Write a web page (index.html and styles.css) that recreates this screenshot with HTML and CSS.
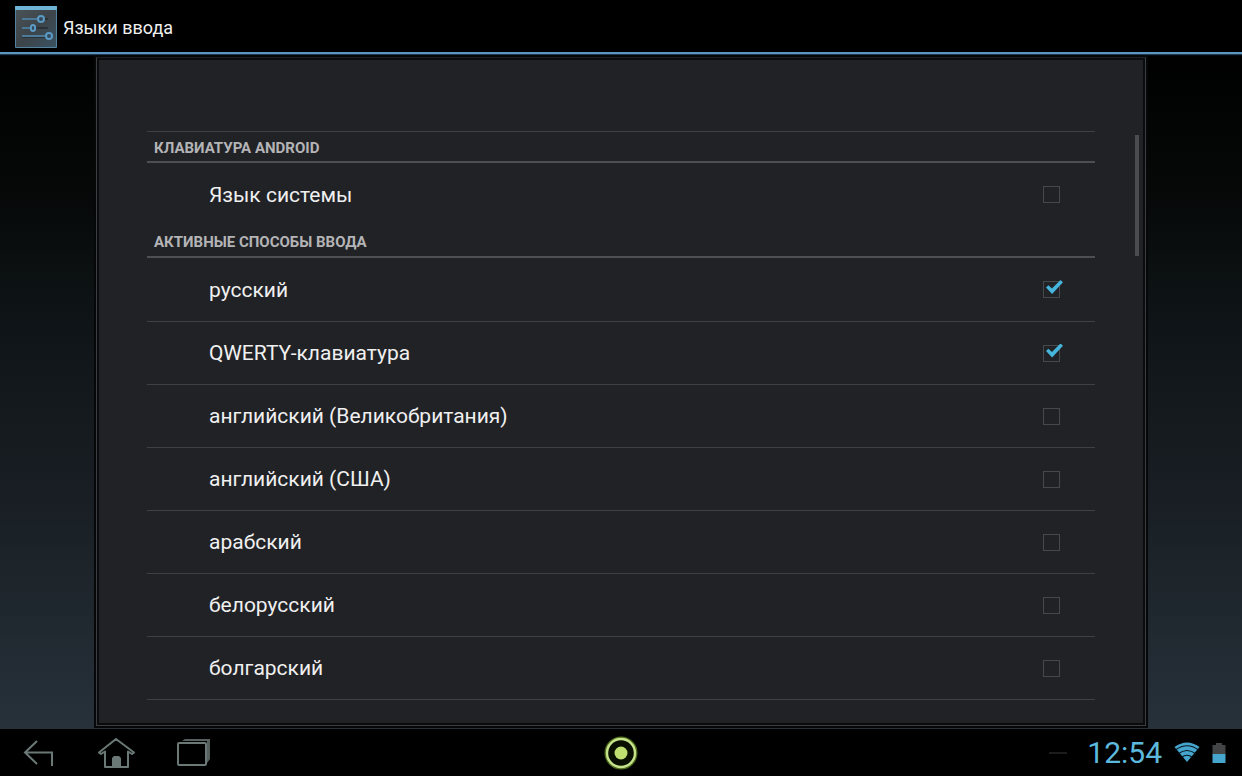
FILE: index.html
```html
<!DOCTYPE html>
<html lang="ru">
<head>
    <meta charset="UTF-8">
    <meta name="viewport" content="width=device-width, initial-scale=1.0">
    <title>Языки ввода</title>
    <link rel="stylesheet" href="styles.css">
</head>
<body>
    <header>
        <svg class="app-icon" viewBox="0 0 42 42" aria-hidden="true">
            <defs>
                <linearGradient id="tile" x1="0" y1="0" x2="1" y2="1">
                    <stop offset="0" stop-color="#4a5357"/>
                    <stop offset="0.5" stop-color="#3c4449"/>
                    <stop offset="1" stop-color="#3a5262"/>
                </linearGradient>
            </defs>
            <rect width="42" height="42" rx="1" fill="#5483a0"/>
            <rect x="1" y="3" width="40" height="38" fill="url(#tile)"/>
            <rect width="42" height="4" rx="1" fill="#6fb3d6"/>
            <path d="M7 13h26M7 22h26M7 31h26" stroke="#2c3338" stroke-width="2"/>
            <path d="M7 13h16M7 22h9M7 30h23" stroke="#5590b5" stroke-width="1.3"/>
            <g fill="#33495a" stroke="#5a9ac4" stroke-width="2">
                <circle cx="26" cy="13" r="3"/>
                <ellipse cx="18" cy="22" rx="2.2" ry="3"/>
                <circle cx="34" cy="30" r="3"/>
            </g>
        </svg>
        <h1>Языки ввода</h1>
    </header>

    <main>
        <form class="panel">
            <h2 class="first">Клавиатура Android</h2>
            <ul>
                <li><label>Язык системы <input type="checkbox"></label></li>
            </ul>
            <h2>Активные способы ввода</h2>
            <ul class="languages">
                <li><label>русский <input type="checkbox" checked></label></li>
                <li><label>QWERTY-клавиатура <input type="checkbox" checked></label></li>
                <li><label>английский (Великобритания) <input type="checkbox"></label></li>
                <li><label>английский (США) <input type="checkbox"></label></li>
                <li><label>арабский <input type="checkbox"></label></li>
                <li><label>белорусский <input type="checkbox"></label></li>
                <li><label>болгарский <input type="checkbox"></label></li>
            </ul>
            <span class="scroll-thumb"></span>
        </form>
    </main>

    <footer>
        <nav>
            <button type="button" aria-label="Назад">
                <svg width="32" height="30" viewBox="0 0 32 30"><path d="M14 3L2 14.500L14 26M2 14.500H29V28" fill="none" stroke="#6a7976" stroke-width="2"/></svg>
            </button>
            <button type="button" aria-label="Домой">
                <svg width="38" height="32" viewBox="0 0 38 32">
                    <path d="M19 2L2 15.500L4 17L8 14.500V30H31V14.500L35 17L37 15.500Z" fill="none" stroke="#6a7976" stroke-width="2" stroke-linejoin="round"/>
                    <path d="M15 30V21l2-2h5l2 2v9z" fill="#6a7976"/>
                </svg>
            </button>
            <button type="button" aria-label="Недавние приложения">
                <svg width="34" height="30" viewBox="0 0 34 30">
                    <path d="M5 3L8 1H33V21L30 25V3Z" fill="#56615f"/>
                    <rect x="1" y="5" width="28" height="22" rx="1" fill="#000" stroke="#6a7976" stroke-width="2"/>
                </svg>
            </button>
        </nav>
        <button type="button" class="ring" aria-label="Меню">
            <svg width="34" height="34" viewBox="0 0 34 34">
                <circle cx="17" cy="17" r="14" fill="none" stroke="#4d6a1c" stroke-width="5"/>
                <circle cx="17" cy="17" r="14" fill="#0a1000" stroke="#c6e38c" stroke-width="2.400"/>
                <circle cx="17" cy="17" r="6.500" fill="#bfe070"/>
            </svg>
        </button>
        <div class="status">
            <span class="dash"></span>
            <time>12:54</time>
            <svg width="26" height="21" viewBox="0 0 26 21" aria-hidden="true">
                <path d="M13 20L0.500 5Q13 -4 25.500 5Z" fill="#46a5cc"/>
                <path d="M1.500 8Q13 -0.500 24.500 8M4 12Q13 5 22 12M7.500 15.500Q13 11 18.500 15.500" fill="none" stroke="#06141b" stroke-width="1.200"/>
            </svg>
            <svg width="14" height="20" viewBox="0 0 14 20" aria-hidden="true">
                <path d="M4 0h6v2h3.500v9H0.500V2H4z" fill="#434445"/>
                <rect x="0.500" y="11" width="13" height="9" fill="#46a5cc"/>
            </svg>
        </div>
    </footer>
</body>
</html>
```

FILE: styles.css
```css
* {
    box-sizing: border-box;
}

body {
    margin: 0;
    height: 100vh;
    display: flex;
    flex-direction: column;
    overflow: hidden;
    font-family: Roboto, "Liberation Sans", sans-serif;
    background-color: #000;
    color: #f0f0f0;
}

header {
    display: flex;
    align-items: center;
    gap: 6px;
    height: 54px;
    padding: 2px 15px 0;
    background: #000;
    border-bottom: 2px solid #5f96c0;
    box-shadow: 0 1px 1px #1d3a52;
    position: relative;
}

.app-icon {
    width: 42px;
    height: 42px;
}

header h1 {
    margin: 0;
    font-size: 18px;
    font-weight: 400;
}

main {
    flex: 1;
    min-height: 0;
    display: flex;
    padding: 3px 96px 3px;
    background: linear-gradient(#000 0%, #060808 20%, #0e1416 38%, #181e23 65%, #27313a 100%);
}

.panel {
    position: relative;
    flex: 1;
    overflow: hidden;
    padding: 73px 50px 0;
    background: #212226;
    border: 1px solid #3c3e42;
    border-top-color: #1c1d20;
    box-shadow: inset 0 0 0 2px #0a0b0d, 0 0 0 2px #060708;
}

.panel h2 {
    display: flex;
    align-items: center;
    height: 32px;
    margin: 0;
    padding: 2px 7px 0;
    font-size: 15px;
    font-weight: 700;
    text-transform: uppercase;
    color: #b4b4b6;
    border-bottom: 2px solid #4d4f53;
}

.panel h2.first {
    border-top: 1px solid #3e4044;
}

.panel ul {
    list-style: none;
    margin: 0;
    padding: 0;
}

.panel li {
    height: 63px;
}

.panel li + li {
    border-top: 1px solid #3e4044;
}

.languages {
    border-bottom: 1px solid #3e4044;
}

.panel label {
    display: flex;
    align-items: center;
    justify-content: space-between;
    height: 100%;
    padding: 0 35px 0 62px;
    font-size: 21px;
}

.panel input {
    appearance: none;
    position: relative;
    width: 17px;
    height: 17px;
    margin: 0;
    border: 1px solid #46484c;
}

.panel input:checked::after {
    content: "";
    position: absolute;
    left: 2px;
    top: -2px;
    width: 17px;
    height: 14px;
    background: #45b5dc;
    clip-path: polygon(0 54%, 14% 38%, 35% 60%, 85% 0, 100% 16%, 36% 100%);
}

.scroll-thumb {
    position: absolute;
    top: 77px;
    right: 6px;
    width: 4px;
    height: 121px;
    background: #4b4c50;
}

footer {
    display: grid;
    grid-template-columns: 1fr auto 1fr;
    align-items: center;
    height: 47px;
    padding: 0 16px;
    background: #000;
}

footer button {
    display: flex;
    padding: 0;
    background: none;
    border: none;
}

nav {
    display: flex;
    align-items: center;
    gap: 42px;
    padding-left: 7px;
}

.status {
    display: flex;
    align-items: center;
    justify-content: flex-end;
    gap: 12px;
}

.dash {
    width: 18px;
    height: 2px;
    margin-right: 8px;
    background: #1c1c1c;
}

time {
    font-size: 30px;
    color: #5cb8dc;
}
```
